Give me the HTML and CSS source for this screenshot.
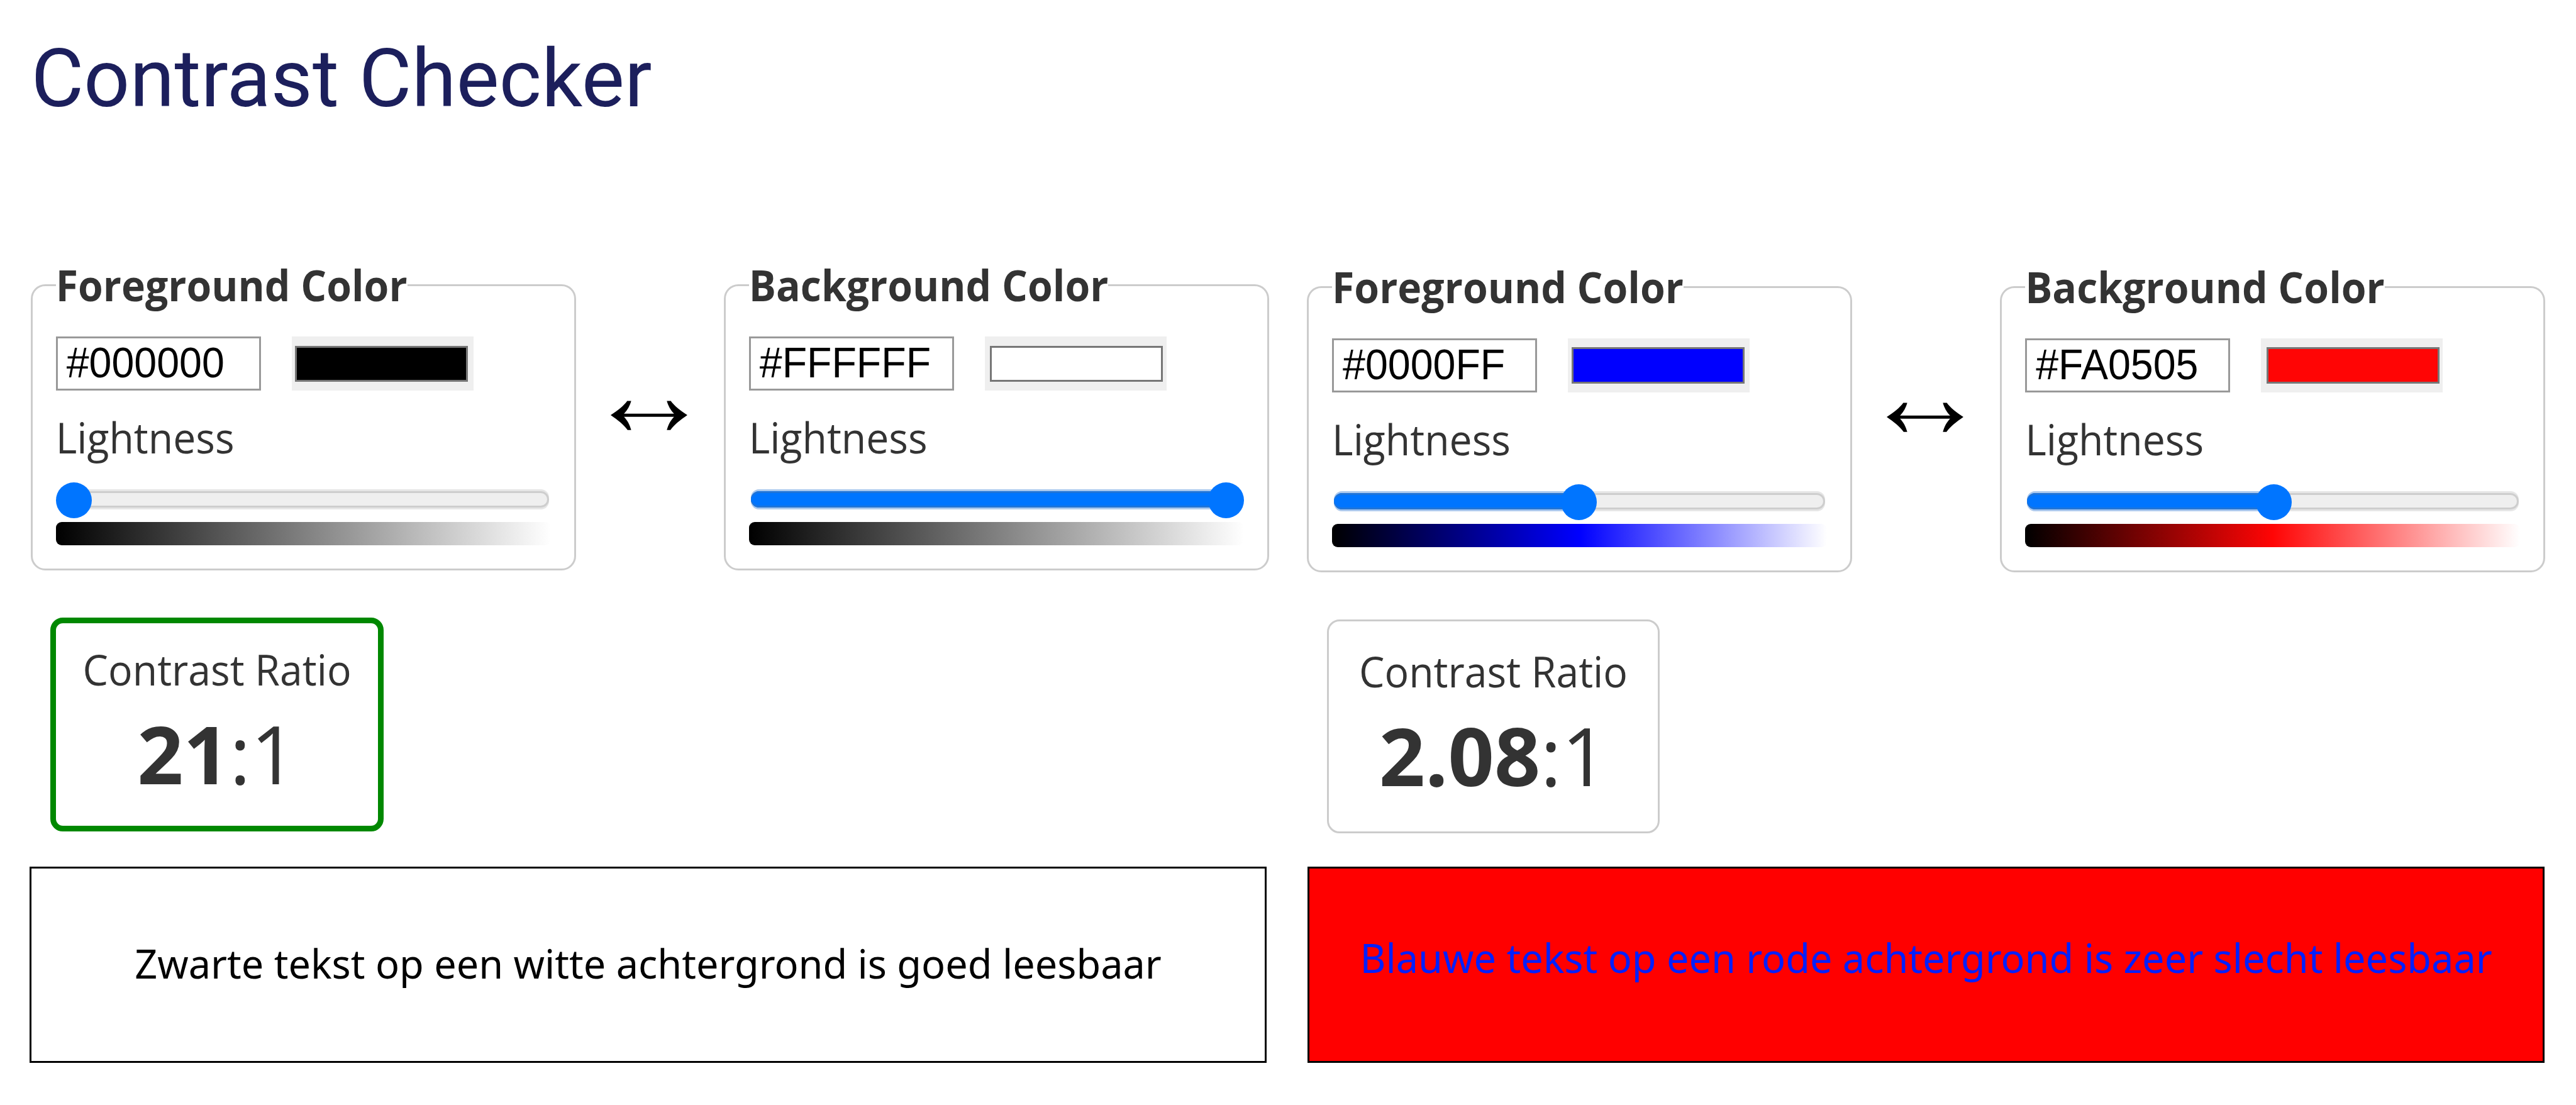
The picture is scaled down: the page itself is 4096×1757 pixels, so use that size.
FILE: index.html
```html
<!DOCTYPE html>
<html lang="nl">
<head>
<meta charset="utf-8">
<title>Contrast Checker</title>
<link rel="stylesheet" href="styles.css">
</head>
<body>
<h1 class="title">Contrast Checker</h1>

<main class="checkers">
  <section class="checker">
    <div class="pickers">
      <fieldset class="picker">
        <legend class="legend">Foreground Color</legend>
        <div class="inputs">
          <div class="hex"><span class="hex-text">#000000</span></div>
          <div class="swatch"><div class="chip black"></div></div>
        </div>
        <div class="label">Lightness</div>
        <div class="slider"><div class="track"></div><div class="thumb" style="left:0"></div></div>
        <div class="ramp gray-ramp"></div>
      </fieldset>
      <svg class="swap" viewBox="1600 1100 410 110"><path d="M1696 1152.500C1716 1139 1732 1127 1742 1113H1753C1749 1127 1743 1138 1733 1148.500H1872C1862 1138 1856 1127 1852 1113H1863C1873 1127 1889 1139 1909 1152.500C1889 1166 1873 1179 1862 1194H1852C1856 1179 1862 1168 1872 1157.300H1733C1743 1168 1749 1179 1753 1194H1743C1732 1179 1716 1166 1696 1152.500Z"/></svg>
      <fieldset class="picker">
        <legend class="legend">Background Color</legend>
        <div class="inputs">
          <div class="hex"><span class="hex-text">#FFFFFF</span></div>
          <div class="swatch shifted"><div class="chip white"></div></div>
        </div>
        <div class="label">Lightness</div>
        <div class="slider"><div class="track"><div class="fill" style="width:96%"></div></div><div class="thumb" style="left:729.9px"></div></div>
        <div class="ramp gray-ramp"></div>
      </fieldset>
    </div>
    <div class="ratio pass">
      <div class="caption">Contrast Ratio</div>
      <div class="value"><b>21</b>:1</div>
    </div>
  </section>

  <section class="checker">
    <div class="pickers">
      <fieldset class="picker">
        <legend class="legend">Foreground Color</legend>
        <div class="inputs">
          <div class="hex"><span class="hex-text">#0000FF</span></div>
          <div class="swatch"><div class="chip blue"></div></div>
        </div>
        <div class="label">Lightness</div>
        <div class="slider"><div class="track"><div class="fill" style="width:50%"></div></div><div class="thumb" style="left:363.5px"></div></div>
        <div class="ramp blue-ramp"></div>
      </fieldset>
      <svg class="swap" viewBox="1600 1100 410 110"><path d="M1696 1152.500C1716 1139 1732 1127 1742 1113H1753C1749 1127 1743 1138 1733 1148.500H1872C1862 1138 1856 1127 1852 1113H1863C1873 1127 1889 1139 1909 1152.500C1889 1166 1873 1179 1862 1194H1852C1856 1179 1862 1168 1872 1157.300H1733C1743 1168 1749 1179 1753 1194H1743C1732 1179 1716 1166 1696 1152.500Z"/></svg>
      <fieldset class="picker">
        <legend class="legend">Background Color</legend>
        <div class="inputs">
          <div class="hex"><span class="hex-text">#FA0505</span></div>
          <div class="swatch shifted"><div class="chip red"></div></div>
        </div>
        <div class="label">Lightness</div>
        <div class="slider"><div class="track"><div class="fill" style="width:50%"></div></div><div class="thumb" style="left:366.4px"></div></div>
        <div class="ramp red-ramp"></div>
      </fieldset>
    </div>
    <div class="ratio">
      <div class="caption">Contrast Ratio</div>
      <div class="value"><b>2.08</b>:1</div>
    </div>
  </section>
</main>

<div class="samples">
  <p class="sample readable"><span>Zwarte tekst op een witte achtergrond is goed leesbaar</span></p>
  <p class="sample unreadable"><span>Blauwe tekst op een rode achtergrond is zeer slecht leesbaar</span></p>
</div>
</body>
</html>
```

FILE: styles.css
```css
* { box-sizing: border-box; }

body {
  margin: 0;
  width: 4096px;
  height: 1757px;
  overflow: hidden;
  background: #fff;
  color: #333;
  font-family: "Open Sans", sans-serif;
  font-size: 64.3px;
  line-height: 80px;
  display: flow-root;
}

.title {
  margin: 50.1px 0 0 49.4px;
  font: 400 128.6px/150px Roboto, sans-serif;
  color: #1c1f5c;
}

.checkers {
  display: grid;
  grid-template-columns: 1969.4px 1969.4px;
  column-gap: 60px;
  height: 964.1px;
  margin: 213.6px 0 0 48.7px;
}

.checker + .checker { padding-top: 2.9px; }

.pickers { display: flex; align-items: flex-start; }

.picker {
  width: 867.3px;
  height: 493.7px;
  flex: none;
  margin: 0;
  padding: 0 37px;
  border: 3px solid #ccc;
  border-radius: 23px;
}

.legend {
  padding: 0;
  font-weight: 700;
}

.legend, .label, .caption {
  height: 80px;
  white-space: nowrap;
  transform: scaleY(1.06);
  transform-origin: 0 65px;
}

.inputs {
  display: flex;
  gap: 48.7px;
  margin-top: 41.6px;
  height: 85.9px;
}

.hex {
  width: 326.3px;
  border: 3px solid #999;
  padding-left: 14px;
  background: #fff;
  color: #000;
  font: 64.5px/80px "Liberation Sans", Arial, sans-serif;
}

.hex-text {
  display: inline-block;
  transform: scaleY(1.07);
  transform-origin: 0 62px;
  margin-top: -3px;
}

.swatch {
  width: 289.1px;
  padding: 14.3px 8.6px 14.3px 5.7px;
  background: #efefef;
}

.swatch.shifted { padding: 14.3px 5.7px 14.3px 8.6px; }

.chip { height: 100%; border: 3px solid #767676; }
.black { background: #000; }
.white { background: #fff; }
.blue { background: #00f; }
.red { background: #ff0505; }

.label { margin-top: 35px; }

.slider {
  position: relative;
  height: 57.2px;
  margin-top: 31px;
  padding: 14.3px 2.9px 0;
}

.track {
  height: 26px;
  border-radius: 13px;
  background: #efefef;
  box-shadow: inset 0 0 0 3px #cecece, 0 3px #e6e6e6, 0 -3px #e6e6e6;
}

.fill {
  height: 26px;
  border-radius: 13px 0 0 13px;
  background: #0075ff;
  box-shadow: inset 0 3px #2074d8, inset 0 -3px #2074d8, 0 3px #abc9ee, 0 -3px #abc9ee;
}

.thumb {
  position: absolute;
  top: 0;
  width: 57.2px;
  height: 57.2px;
  border-radius: 50%;
  background: #0075ff;
}

.ramp {
  height: 37.2px;
  margin-top: 5.8px;
  border-radius: 9px;
}

.gray-ramp { background: linear-gradient(90deg, #000, #808080, #fff); }
.blue-ramp { background: linear-gradient(90deg, #000, #00f, #fff); }
.red-ramp { background: linear-gradient(90deg, #000, #ff0505, #fff); }

.swap {
  width: 234.8px;
  height: 63px;
  flex: none;
  margin-top: 216px;
  fill: #000;
}

.ratio {
  --edge: 3px;
  width: 529.8px;
  height: 340.6px;
  margin: 74.4px 0 0 31.5px;
  padding-top: calc(43.6px - var(--edge));
  border: var(--edge) solid #ccc;
  border-radius: 20px;
  text-align: center;
}

.ratio.pass {
  --edge: 9px;
  border-color: #080;
}

.value {
  margin-top: 22.6px;
  font-size: 128.2px;
  line-height: 140px;
}

.samples {
  display: grid;
  grid-template-columns: 1966.6px 1966.6px;
  column-gap: 65.6px;
  margin-left: 47.2px;
}

.sample {
  height: 312.4px;
  margin: 0;
  border: 3px solid #000;
  text-align: center;
  font: 63px/90px "Noto Sans", sans-serif;
  white-space: nowrap;
}

.readable { padding-top: 105.8px; color: #000; }
.unreadable { padding-top: 97.2px; background: #f00; color: #0020ff; }
```
